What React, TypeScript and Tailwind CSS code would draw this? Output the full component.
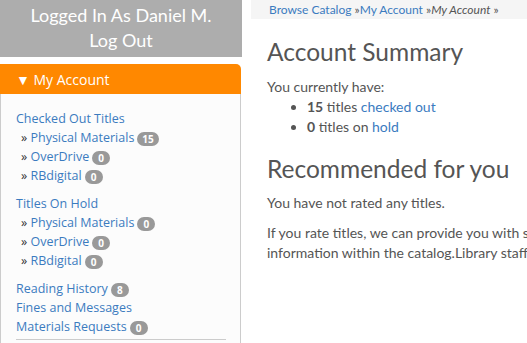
import React from "react";

const Badge = ({ n }: { n: number }) => (
  <span className="ml-[3px] inline-flex h-[14px] min-w-[18px] items-center justify-center rounded-full bg-[#999999] px-[5px] align-[-1px] text-[10px] font-bold leading-none text-white">
    {n}
  </span>
);

const Sub = ({ label, n }: { label: string; n: number }) => (
  <div className="pl-[5px] leading-[19px]">
    <span className="text-[#333]">» </span>
    <a className="text-[#3b7bbf]">{label}</a>
    <Badge n={n} />
  </div>
);

export default function App() {
  return (
    <div className="flex h-[343px] w-[527px] overflow-hidden bg-white font-['Lato',sans-serif] text-[14px] text-[#555]">
      {/* Sidebar */}
      <div className="w-[242px] shrink-0">
        <div className="flex h-[57px] flex-col items-center justify-center bg-[#adadad] pb-[1px] text-[18px] leading-[25px] text-white">
          <div>Logged In As Daniel M.</div>
          <div>Log Out</div>
        </div>
        <div className="mt-[7px] w-[241px] font-['Open_Sans',sans-serif] text-[12.5px]">
          <div className="flex h-[30px] items-center rounded-tr-[5px] bg-[#ff8800] pl-[16px] text-[14px] text-white">
            ▼ My Account
          </div>
          <div className="border-x border-[#cccccc] bg-[#fcfcfc] px-[15px] pt-[16px] pb-[5px]">
            <div className="leading-[18px] text-[#3b7bbf]">Checked Out Titles</div>
            <Sub label="Physical Materials" n={15} />
            <Sub label="OverDrive" n={0} />
            <Sub label="RBdigital" n={0} />
            <div className="mt-[9px] leading-[19px] text-[#3b7bbf]">Titles On Hold</div>
            <Sub label="Physical Materials" n={0} />
            <Sub label="OverDrive" n={0} />
            <Sub label="RBdigital" n={0} />
            <div className="mt-[9px] leading-[19px] text-[#3b7bbf]">
              Reading History<Badge n={8} />
            </div>
            <div className="leading-[19px] text-[#3b7bbf]">Fines and Messages</div>
            <div className="leading-[19px] text-[#3b7bbf]">
              Materials Requests<Badge n={0} />
            </div>
            <div className="mt-[3px] h-px w-[210px] bg-[#cccccc]" />
          </div>
        </div>
      </div>

      {/* Main */}
      <div className="min-w-0 flex-1 overflow-hidden pl-[9px]">
        <div className="flex h-[19px] items-center whitespace-nowrap bg-[#f5f5f5] pl-[18px] text-[12px] text-[#3b7bbf]">
          <span>Browse Catalog</span>
          <span className="text-[#555]">&nbsp;»</span>
          <span>My Account</span>
          <span className="text-[#555]">&nbsp;»</span>
          <span className="italic text-[#555]">My Account</span>
          <span className="text-[#555]">&nbsp;»</span>
        </div>
        <div className="whitespace-nowrap pl-[16px]">
          <h1 className="mt-[17px] text-[24.5px] leading-[32px] text-[#555]">Account Summary</h1>
          <p className="mt-[9px] leading-[20px]">You currently have:</p>
          <ul className="list-disc pl-[40px] leading-[20px] marker:text-[#555]">
            <li>
              <b className="font-bold">15</b> titles <a className="text-[#3b7bbf]">checked out</a>
            </li>
            <li>
              <b className="font-bold">0</b> titles on <a className="text-[#3b7bbf]">hold</a>
            </li>
          </ul>
          <h2 className="mt-[16px] text-[24.5px] leading-[32px] text-[#555]">Recommended for you</h2>
          <p className="mt-[8px] leading-[20px]">You have not rated any titles.</p>
          <p className="mt-[10px] leading-[20px]">
            If you rate titles, we can provide you with suggestions for titles you might like to read.
            <br />
            information within the catalog.Library staff does not have access to your suggestions.
          </p>
        </div>
      </div>
    </div>
  );
}
